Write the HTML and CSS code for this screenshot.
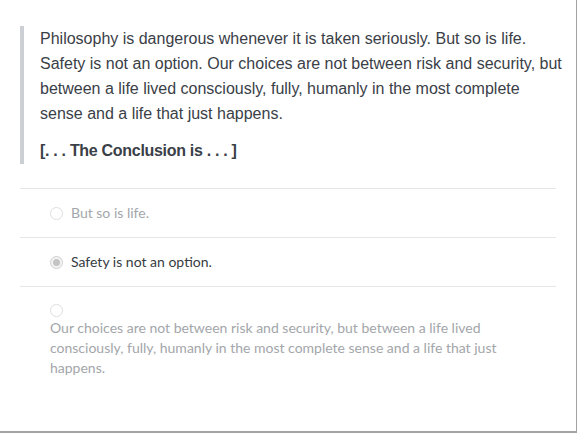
FILE: index.html
```html
<!DOCTYPE html>
<html>
<head>
<meta charset="utf-8">
<link rel="stylesheet" href="styles.css">
</head>
<body>
<div class="frame">
  <div class="question">
    <blockquote class="quote">
      <p class="quote-text">Philosophy is dangerous whenever it is taken seriously. But so is life. Safety is not an option. Our choices are not between risk and security, but between a life lived consciously, fully, humanly in the most complete sense and a life that just happens.</p>
      <p class="quote-gap">[. . . The Conclusion is . . . ]</p>
    </blockquote>
    <ul class="options">
      <li class="option">
        <span class="radio"></span>
        <span class="label muted">But so is life.</span>
      </li>
      <li class="option">
        <span class="radio checked"></span>
        <span class="label">Safety is not an option.</span>
      </li>
      <li class="option stacked">
        <span class="radio"></span>
        <span class="label muted">Our choices are not between risk and security, but between a life lived consciously, fully, humanly in the most complete sense and a life that just happens.</span>
      </li>
    </ul>
  </div>
</div>
</body>
</html>
```
FILE: styles.css
```css
html, body {
  margin: 0;
  padding: 0;
  background: #ffffff;
}

.frame {
  box-sizing: border-box;
  width: 577px;
  height: 433px;
  border-right: 1px solid #a3a3a3;
  border-bottom: 2px solid #a3a3a3;
  padding: 26px 20px 0 20px;
}

.question {
  width: 536px;
}

.quote {
  margin: 0 -6px 0 0;
  padding: 0 0 0 16px;
  border-left: 4px solid #ccd0d4;
  font-family: "Liberation Sans", Arial, sans-serif;
  font-size: 16px;
  line-height: 25px;
  color: #3a4047;
}

.quote-text {
  margin: 0;
}

.quote-gap {
  margin: 12px 0 0 0;
  font-weight: bold;
  letter-spacing: -0.3px;
  height: 26px;
}

.options {
  list-style: none;
  margin: 24px 0 0 0;
  padding: 0;
  font-family: Lato, "Open Sans", sans-serif;
  font-size: 14px;
  line-height: 20px;
}

.option {
  display: flex;
  align-items: center;
  gap: 8px;
  border-top: 1px solid #e6e6e6;
  padding: 14px 30px;
}

.option.stacked {
  flex-direction: column;
  align-items: flex-start;
  gap: 0;
}

.option.stacked .radio {
  margin: 3px 0 1px 0;
}

.radio {
  box-sizing: border-box;
  flex: none;
  width: 13px;
  height: 13px;
  border-radius: 50%;
  border: 1px solid #dedede;
  background: #ffffff;
  display: flex;
  align-items: center;
  justify-content: center;
}

.radio.checked {
  border-color: #d0d0d0;
  background: #f3f3f3;
}

.radio.checked::after {
  content: "";
  width: 7px;
  height: 7px;
  border-radius: 50%;
  background: #c4c4c4;
}

.label {
  color: #363c42;
}

.label.muted {
  color: #a3a6aa;
}
```
